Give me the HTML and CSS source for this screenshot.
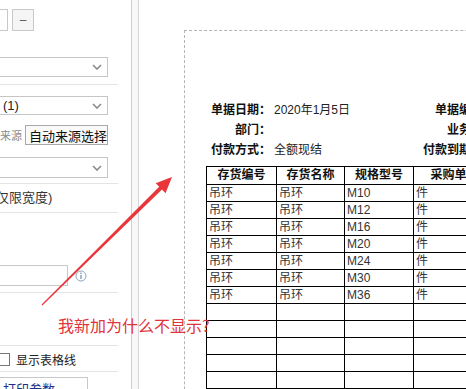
FILE: index.html
```html
<!DOCTYPE html>
<html lang="zh-CN">
<head>
  <meta charset="UTF-8" />
  <title>打印设计</title>
  <link rel="stylesheet" href="styles.css">
</head>
<body>
<div class="app">

  <!-- left settings panel -->
  <aside class="panel">
    <div class="top-row">
      <span class="input-stub"></span>
      <button class="mini-btn">–</button>
    </div>

    <div class="select sel-1">
      <span class="sel-text"></span>
      <svg class="chev" width="10" height="6" viewBox="0 0 10 6"><polyline points="1,1 5,5 9,1" /></svg>
    </div>

    <hr class="sep sep-1">

    <div class="select sel-2">
      <span class="sel-text">(1)</span>
      <svg class="chev" width="10" height="6" viewBox="0 0 10 6"><polyline points="1,1 5,5 9,1" /></svg>
    </div>

    <div class="source-row">
      <span class="source-label">来源</span>
      <button class="source-btn">自动来源选择</button>
    </div>

    <div class="select sel-3">
      <span class="sel-text"></span>
      <svg class="chev" width="10" height="6" viewBox="0 0 10 6"><polyline points="1,1 5,5 9,1" /></svg>
    </div>

    <hr class="sep sep-2">

    <p class="note">仅限宽度)</p>

    <hr class="sep sep-3">

    <div class="field-row">
      <span class="field"></span>
      <svg class="info-icon" width="12" height="12" viewBox="0 0 12 12">
        <circle cx="6" cy="6" r="5" />
        <line x1="6" y1="5" x2="6" y2="9" />
        <circle class="dot" cx="6" cy="3.2" r="0.8" />
      </svg>
    </div>

    <hr class="sep sep-4">
    <hr class="sep sep-5">

    <label class="check-row">
      <span class="checkbox"></span>
      <span>显示表格线</span>
    </label>

    <hr class="sep sep-6">

    <button class="print-btn">打印参数</button>
  </aside>

  <div class="divider"></div>

  <!-- print preview -->
  <main class="canvas">
    <div class="sheet">
      <div class="info">
        <span class="lbl">单据日期：</span><span class="val">2020年1月5日</span><span class="lbl lbl-r">单据编号：</span>
        <span class="lbl">部门：</span><span class="val"></span><span class="lbl lbl-r">业务员：</span>
        <span class="lbl">付款方式：</span><span class="val">全额现结</span><span class="lbl lbl-r">付款到期日：</span>
      </div>

      <table class="grid">
        <colgroup>
          <col class="c1"><col class="c2"><col class="c3"><col class="c4">
        </colgroup>
        <thead>
          <tr><th>存货编号</th><th>存货名称</th><th>规格型号</th><th>采购单位</th></tr>
        </thead>
        <tbody>
          <tr><td>吊环</td><td>吊环</td><td>M10</td><td>件</td></tr>
          <tr><td>吊环</td><td>吊环</td><td>M12</td><td>件</td></tr>
          <tr><td>吊环</td><td>吊环</td><td>M16</td><td>件</td></tr>
          <tr><td>吊环</td><td>吊环</td><td>M20</td><td>件</td></tr>
          <tr><td>吊环</td><td>吊环</td><td>M24</td><td>件</td></tr>
          <tr><td>吊环</td><td>吊环</td><td>M30</td><td>件</td></tr>
          <tr><td>吊环</td><td>吊环</td><td>M36</td><td>件</td></tr>
          <tr><td></td><td></td><td></td><td></td></tr>
          <tr><td></td><td></td><td></td><td></td></tr>
          <tr><td></td><td></td><td></td><td></td></tr>
          <tr><td></td><td></td><td></td><td></td></tr>
          <tr><td></td><td></td><td></td><td></td></tr>
          <tr><td></td><td></td><td></td><td></td></tr>
        </tbody>
      </table>
    </div>
  </main>
</div>

<!-- screenshot annotation -->
<svg class="arrow" width="466" height="389" viewBox="0 0 466 389">
  <polygon points="41.6,304.6 159.2,186.8 155.7,183.2 172,177 165.5,193.2 162,189.6 42.4,305.4" />
</svg>
<span class="annotation">我新加为什么不显示?</span>

</body>
</html>
```

FILE: styles.css
```css
* {
  box-sizing: border-box;
  margin: 0;
  padding: 0;
}

html, body {
  width: 466px;
  height: 389px;
  overflow: hidden;
  background: #fff;
  font-family: "Liberation Sans", "Noto Sans CJK SC", sans-serif;
  color: #222;
}

.app {
  display: flex;
  height: 389px;
}

/* ---------- left panel ---------- */

.panel {
  width: 131px;
  flex: none;
  overflow: hidden;
  font-size: 13px;
}

.top-row {
  display: flex;
  gap: 4px;
  margin-top: 9px;
  height: 22px;
}

.input-stub {
  width: 18px;
  margin-left: -10px;
  border: 1px solid #c8c8c8;
}

.mini-btn {
  width: 22px;
  height: 22px;
  border: 1px solid #c8c8c8;
  background: #f5f5f5;
  color: #555;
  font-size: 12px;
  font-family: inherit;
}

.select {
  display: flex;
  align-items: center;
  justify-content: space-between;
  margin-left: -2px;
  width: 110px;
  border: 1px solid #c6c6c6;
  background: #fff;
  padding: 0 5px 0 4px;
}

.sel-text {
  font-size: 13px;
  line-height: 16px;
  color: #222;
}

.chev polyline {
  fill: none;
  stroke: #8a8a8a;
  stroke-width: 1.6;
}

.sel-1 { margin-top: 26px; height: 20px; }
.sel-2 { margin-top: 11px; height: 19px; }
.sel-3 { margin-top: 12px; height: 21px; }

.sep {
  border: 0;
  height: 1px;
  width: 118px;
  background: #e4e4e4;
}

.sep-1 { margin-top: 7px; }
.sep-2 { margin-top: 5px; }
.sep-3 { margin-top: 6px; }
.sep-4 { margin-top: 6px; }
.sep-5 { margin-top: 52px; }
.sep-6 { margin-top: 5px; }

.source-row {
  display: flex;
  align-items: center;
  margin-top: 10px;
  height: 20px;
}

.source-label {
  width: 25px;
  font-size: 11px;
  color: #8a8a8a;
  white-space: nowrap;
}

.source-btn {
  width: 83px;
  height: 20px;
  border: 1px solid #a8a8a8;
  background: #fafafa;
  font-family: inherit;
  font-size: 13px;
  color: #111;
  text-align: left;
  padding-left: 3px;
  white-space: nowrap;
  overflow: hidden;
}

.note {
  margin-top: 6px;
  margin-left: -4px;
  height: 16px;
  line-height: 16px;
  font-size: 13px;
  color: #333;
  white-space: nowrap;
}

.field-row {
  display: flex;
  align-items: center;
  margin-top: 52px;
  height: 21px;
}

.field {
  width: 78px;
  height: 21px;
  margin-left: -10px;
  border: 1px solid #c8c8c8;
}

.info-icon {
  margin-left: 7px;
}

.info-icon circle {
  fill: none;
  stroke: #8fa6c2;
  stroke-width: 1;
}

.info-icon line {
  stroke: #6f8aad;
  stroke-width: 1.2;
}

.info-icon .dot {
  fill: #6f8aad;
  stroke: none;
}

.check-row {
  display: flex;
  align-items: center;
  gap: 6px;
  margin-top: 6px;
  height: 14px;
  font-size: 12px;
  color: #222;
}

.checkbox {
  width: 13px;
  height: 13px;
  margin-left: -3px;
  border: 1px solid #777;
  background: #fff;
}

.print-btn {
  display: block;
  margin-top: 5px;
  margin-left: -2px;
  width: 90px;
  height: 22px;
  border: 1px solid #c8c8c8;
  background: #fff;
  font-family: inherit;
  font-size: 13px;
  color: #1c2f8a;
  text-align: left;
  padding: 3px 0 0 4px;
  line-height: 16px;
}

.divider {
  width: 8px;
  flex: none;
  border-left: 1px solid #cfcfcf;
  border-right: 1px solid #d6d6d6;
  background: #f8f8f8;
}

/* ---------- preview canvas ---------- */

.canvas {
  flex: 1;
  overflow: hidden;
  background: #fff;
}

.sheet {
  margin: 30px 0 0 45px;
  width: 420px;
  height: 500px;
  border-left: 1px dashed #b4b4b4;
  border-top: 1px dashed #b4b4b4;
  padding: 69px 0 0 21px;
}

.info {
  display: grid;
  grid-template-columns: 63px 146px 72px;
  column-gap: 3px;
  margin-left: 2px;
  font-size: 12px;
  line-height: 20px;
  white-space: nowrap;
}

.lbl {
  font-weight: bold;
  text-align: right;
  color: #111;
}

.lbl-r {
  margin-left: -3px;
}

.val {
  color: #222;
}

.grid {
  margin-top: 6px;
  border-collapse: collapse;
  table-layout: fixed;
  width: 289px;
  font-size: 12px;
}

.c1 { width: 70px; }
.c2 { width: 68px; }
.c3 { width: 69px; }
.c4 { width: 82px; }

.grid th,
.grid td {
  border: 1px solid #000;
  padding: 0 2px;
  line-height: 15px;
  white-space: nowrap;
  overflow: hidden;
}

.grid th {
  height: 18px;
  font-weight: bold;
  text-align: center;
  color: #111;
}

.grid td {
  height: 17px;
  text-align: left;
  color: #333;
}

/* ---------- annotation ---------- */

.arrow {
  position: absolute;
  left: 0;
  top: 0;
  pointer-events: none;
}

.arrow polygon {
  fill: #e8363a;
}

.annotation {
  position: absolute;
  left: 58px;
  top: 315px;
  font-family: "Noto Sans CJK SC", sans-serif;
  font-size: 16px;
  line-height: 20px;
  color: #e0353c;
  white-space: nowrap;
}
```
